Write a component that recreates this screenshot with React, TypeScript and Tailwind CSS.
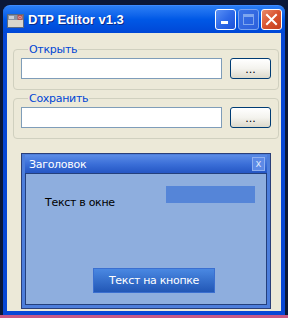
import React from "react";

const font = { fontFamily: "Tahoma, 'DejaVu Sans', sans-serif" };

function GroupBox({ label }: { label: string }) {
  return (
    <fieldset className="mx-[6px] w-[265px] shrink-0 rounded-[4px] border border-[#d0d0bf] px-[7px] pt-[2px] pb-[10px]">
      <legend className="ml-[7px] px-[1px] text-[11px] leading-[13px] tracking-[-0.3px] text-[#0046d5]">{label}</legend>
      <div className="flex items-center">
        <div className="h-[21px] w-[201px] border border-[#7f9db9] bg-white" />
        <button className="ml-[8px] flex h-[21px] w-[41px] items-center justify-center rounded-[3px] border border-[#003c74] bg-gradient-to-b from-[#ffffff] via-[#f4f3ee] to-[#dcd9cb] text-[11px] leading-none text-black">
          <span className="mt-[2px]">...</span>
        </button>
      </div>
    </fieldset>
  );
}

export default function App() {
  return (
    <div className="flex h-[318px] w-[288px] flex-col bg-[#0b1838]" style={font}>
      <div className="ml-[3px] mt-[5px] flex w-[282px] shrink-0 flex-col">
        {/* title bar */}
        <div className="flex h-[28px] shrink-0 items-center rounded-t-[7px] border-t border-[#3d8bff] bg-gradient-to-b from-[#2a7ef5] via-[#0058e6] to-[#0047d6] pl-[4px] pr-[3px]">
          <svg width="17" height="14" viewBox="0 0 17 14" className="mt-[2px]">
            <rect x="0.5" y="0.5" width="16" height="13" fill="#d8d6cc" stroke="#5a6a80" />
            <rect x="1" y="1" width="15" height="5" fill="#8a93a3" />
            <rect x="11" y="1.5" width="4" height="4" fill="#e8c0c0" stroke="#b03030" strokeWidth="0.7" />
            <path d="M11.8 2.3 L14.2 4.7 M14.2 2.3 L11.8 4.7" stroke="#b02020" strokeWidth="0.8" />
            <rect x="2" y="2" width="5" height="3" fill="#c8cdd6" />
          </svg>
          <span className="ml-[4px] text-[13px] font-bold leading-none text-white" style={{ fontFamily: "'Liberation Sans', sans-serif", textShadow: "1px 1px #0a2a8a" }}>
            DTP Editor v1.3
          </span>
          <div className="ml-auto flex gap-[2px]">
            <div className="relative h-[21px] w-[21px] rounded-[3px] border border-white bg-gradient-to-br from-[#5a90f5] via-[#2f6ae8] to-[#1b50d8]">
              <div className="absolute bottom-[5px] left-[5px] h-[3px] w-[7px] bg-white" />
            </div>
            <div className="relative h-[21px] w-[21px] rounded-[3px] border border-[#7aa4f0] bg-gradient-to-br from-[#3a72e6] to-[#2c5fdc]">
              <div className="absolute left-[4px] top-[4px] h-[11px] w-[11px] border border-[#7ea6ee] border-t-[3px]" />
            </div>
            <div className="relative flex h-[21px] w-[21px] items-center justify-center rounded-[3px] border border-white bg-gradient-to-br from-[#e88a6a] via-[#d9532f] to-[#c4401e]">
              <svg width="13" height="13" viewBox="0 0 13 13">
                <path d="M2 2 L11 11 M11 2 L2 11" stroke="white" strokeWidth="2" strokeLinecap="square" />
              </svg>
            </div>
          </div>
        </div>
        {/* body */}
        <div className="flex h-[282px] shrink-0 flex-col border-x-[4px] border-b-[4px] border-[#0747d6] bg-[#ece9d8]">
          <div className="mt-[10px] shrink-0">
            <GroupBox label="Открыть" />
          </div>
          <div className="mt-[2px] shrink-0">
            <GroupBox label="Сохранить" />
          </div>
          {/* inner blue window */}
          <div className="ml-[14px] mt-[14px] flex h-[156px] w-[250px] shrink-0 flex-col border border-[#2a3f78] bg-[#4d7edb] px-[3px] pb-[3px] pt-[1px]">
            <div className="flex h-[18px] shrink-0 items-center bg-gradient-to-b from-[#5a8be6] via-[#3b6fd8] to-[#2556c4] pl-[4px] pr-[2px]">
              <span className="text-[11px] leading-none tracking-[-0.3px] text-white">Заголовок</span>
              <div className="ml-auto flex h-[14px] w-[13px] items-center justify-center border border-[#8fb0f0] bg-[#5d8ae6] text-[10px] leading-none text-[#dce6fb]">
                x
              </div>
            </div>
            <div className="flex flex-1 flex-col border border-[#24407c] bg-[#8eaede]">
              <div className="mt-[12px] flex items-start">
                <span className="ml-[19px] mt-[10px] text-[11px] leading-[13px] tracking-[-0.3px] text-black">Текст в окне</span>
                <div className="ml-auto mr-[11px] h-[17px] w-[89px] bg-[#5585d8]" />
              </div>
              <button className="ml-[67px] mt-auto mb-[11px] flex h-[25px] w-[122px] items-center justify-center border border-[#3a6fd0] bg-gradient-to-b from-[#4a88e2] to-[#2257b6] text-[11px] leading-none tracking-[-0.3px] text-white">
                Текст на кнопке
              </button>
            </div>
          </div>
        </div>
      </div>
      <div className="flex-1 bg-[#c85a86]" />
    </div>
  );
}
